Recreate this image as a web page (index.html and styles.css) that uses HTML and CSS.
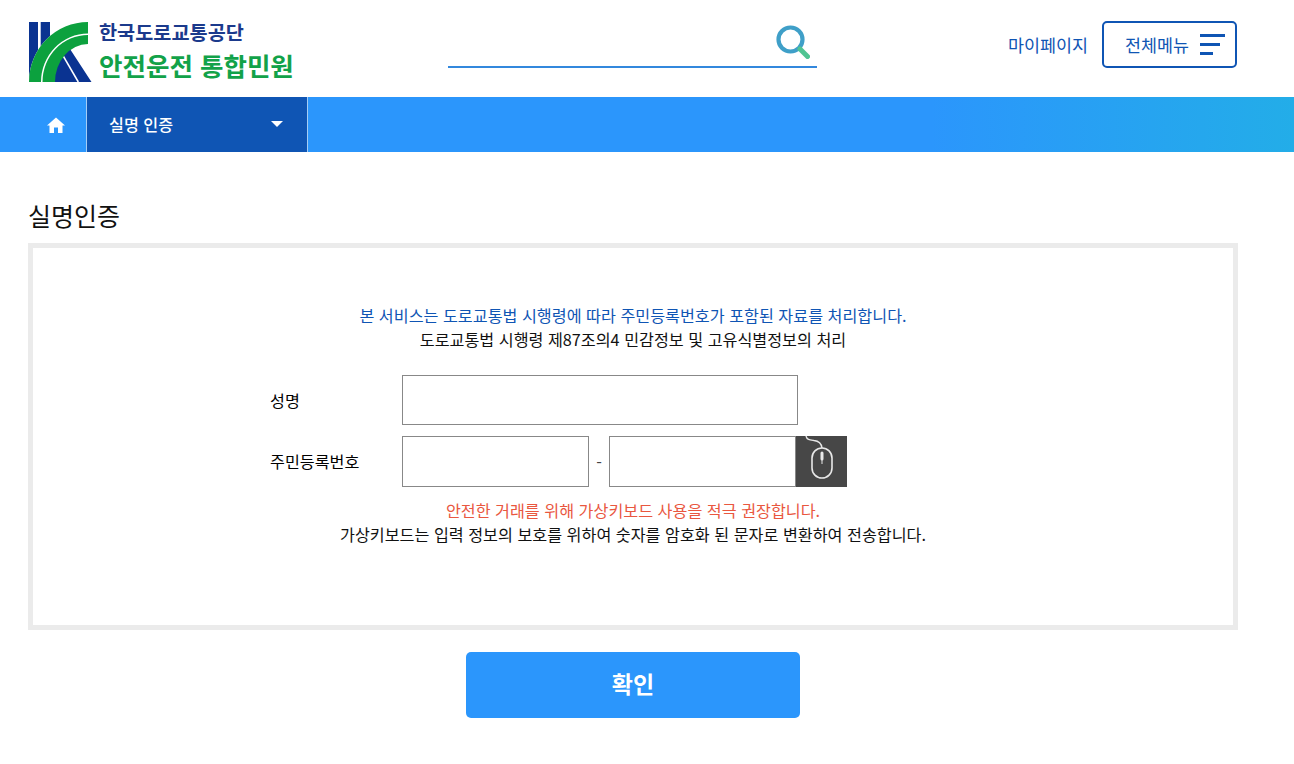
FILE: index.html
```html
<!DOCTYPE html>
<html lang="ko">
<head>
  <meta charset="UTF-8">
  <title>실명인증</title>
  <link rel="stylesheet" href="styles.css">
</head>
<body>
  <header class="header">
    <a class="logo">
      <svg class="logo-mark" width="63" height="60" viewBox="0 0 63 60">
        <rect x="0" y="0" width="9" height="60" fill="#0a3391"/>
        <rect x="11.7" y="0" width="9.3" height="60" fill="#0a3391"/>
        <path d="M59,0 A59,60 0 0 0 0,60 H59 Z" fill="#fff"/>
        <polygon points="41,27 62.5,60 20,60 30,35 33,27" fill="#0a3391"/>
        <path d="M32.7,31.3 L49.3,60" stroke="#fff" stroke-width="1.6" fill="none"/>
        <path d="M59,0 V11.5 A47,48.5 0 0 0 12,60 H0 A59,60 0 0 1 59,0 Z" fill="#0ca13e"/>
        <path d="M59,13 V22 A33,38 0 0 0 26,60 H13.5 A45.5,47 0 0 1 59,13 Z" fill="#0ca13e"/>
      </svg>
      <span class="logo-text">
        <span class="logo-org">한국도로교통공단</span>
        <span class="logo-name">안전운전 통합민원</span>
      </span>
    </a>
    <div class="search">
      <svg width="34" height="34" viewBox="0 0 34 34">
        <circle cx="14.5" cy="14.5" r="12" fill="none" stroke="#3f9fc8" stroke-width="4.2"/>
        <path d="M24 24 L31.5 31.5" stroke="#50c492" stroke-width="5" stroke-linecap="round"/>
      </svg>
    </div>
    <div class="util">
      <a class="mypage">마이페이지</a>
      <button class="all-menu">
        전체메뉴
        <span class="bars"><i></i><i></i><i></i></span>
      </button>
    </div>
  </header>

  <nav class="nav">
    <a class="nav-home">
      <svg width="18" height="16" viewBox="0 0 18 16">
        <path d="M9 0.5 L18 8.5 H15.5 V16 H11 V10.5 H7 V16 H2.5 V8.5 H0 Z" fill="#fff"/>
      </svg>
    </a>
    <a class="nav-select">실명 인증<span class="caret"></span></a>
  </nav>

  <main class="main">
    <h2 class="title">실명인증</h2>
    <section class="box">
      <p class="notice-blue">본 서비스는 도로교통법 시행령에 따라 주민등록번호가 포함된 자료를 처리합니다.</p>
      <p class="notice">도로교통법 시행령 제87조의4 민감정보 및 고유식별정보의 처리</p>
      <div class="form">
        <div class="row">
          <label class="label">성명</label>
          <input class="input input-name" type="text">
        </div>
        <div class="row row-id">
          <label class="label label-id">주민등록번호</label>
          <input class="input input-id" type="text">
          <span class="dash">-</span>
          <input class="input input-id" type="text">
          <span class="mouse-btn">
            <svg width="51" height="51" viewBox="0 0 51 51">
              <path d="M10 0 C11 4 14 4 18 4.5 C23 5 25.5 8 26 12" fill="none" stroke="#e8e8e8" stroke-width="1.4"/>
              <rect x="16" y="12" width="20" height="30" rx="10" fill="none" stroke="#e8e8e8" stroke-width="1.6"/>
              <path d="M26 17 V23" stroke="#e8e8e8" stroke-width="3" stroke-linecap="round"/>
              <path d="M26 23 V28" stroke="#e8e8e8" stroke-width="1"/>
            </svg>
          </span>
        </div>
      </div>
      <p class="notice-red">안전한 거래를 위해 가상키보드 사용을 적극 권장합니다.</p>
      <p class="notice">가상키보드는 입력 정보의 보호를 위하여 숫자를 암호화 된 문자로 변환하여 전송합니다.</p>
    </section>
    <div class="actions">
      <button class="confirm">확인</button>
    </div>
  </main>
</body>
</html>
```

FILE: styles.css
```css
* {
  box-sizing: border-box;
}
body {
  margin: 0;
  background-color: #fff;
  color: #111;
  font-family: "Noto Sans CJK KR", "Noto Sans", sans-serif;
}
p {
  margin: 0;
}
.header {
  display: flex;
  align-items: flex-start;
  height: 97px;
  padding: 21px 57px 0 29px;
}
.logo {
  display: flex;
  width: 419px;
  padding-top: 1px;
}
.logo-text {
  display: flex;
  flex-direction: column;
  margin-left: 7px;
  font-weight: 700;
}
.logo-org {
  height: 26px;
  margin-top: -3px;
  color: #1b3a8c;
  font-size: 19.7px;
  line-height: 26px;
}
.logo-name {
  margin-top: 3px;
  color: #12a249;
  font-size: 25.5px;
  line-height: 34px;
}
.search {
  display: flex;
  justify-content: flex-end;
  width: 369px;
  height: 47px;
  padding: 4px 7px 0 0;
  border-bottom: 2px solid #3388dd;
}
.util {
  display: flex;
  align-items: center;
  margin-left: auto;
  height: 47px;
  gap: 14px;
}
.mypage {
  color: #0f55b4;
  font-size: 17.4px;
}
.all-menu {
  display: flex;
  align-items: center;
  gap: 11px;
  width: 135px;
  height: 47px;
  padding: 0 0 0 21px;
  border: 2px solid #0f55b4;
  border-radius: 5px;
  background: #fff;
  color: #0f55b4;
  font-family: inherit;
  font-size: 17.4px;
}
.bars {
  display: flex;
  flex-direction: column;
  gap: 5.5px;
  width: 25px;
}
.bars i {
  display: block;
  height: 3.5px;
  background-color: #0f55b4;
}
.bars i:nth-child(2) {
  width: 20px;
}
.bars i:nth-child(3) {
  width: 13px;
}
.nav {
  display: flex;
  height: 55px;
  background: linear-gradient(to right, #2b96fc 72%, #23ade8);
}
.nav-home {
  display: flex;
  align-items: center;
  width: 86px;
  padding-left: 47px;
}
.nav-select {
  display: flex;
  align-items: center;
  justify-content: space-between;
  width: 222px;
  padding: 0 24px 2px 22px;
  border-left: 1px solid #a5cdf5;
  border-right: 1px solid #a5cdf5;
  background-color: #0f55b4;
  color: #fff;
  font-size: 16.2px;
  font-weight: 500;
}
.caret {
  width: 0;
  height: 0;
  border-left: 6px solid transparent;
  border-right: 6px solid transparent;
  border-top: 6px solid #fff;
}
.main {
  width: 1210px;
  margin-left: 28px;
}
.title {
  margin: 45px 0 0;
  height: 46px;
  font-size: 25px;
  font-weight: 400;
  line-height: 36px;
}
.box {
  height: 387px;
  padding-top: 55px;
  border: 5px solid #ebebeb;
  text-align: center;
  font-size: 16.2px;
  line-height: 24px;
}
.notice-blue {
  color: #0f55b4;
}
.notice-red {
  color: #e9573f;
}
.notice {
  color: #111;
}
.form {
  margin: 24px 0 11px;
  padding-left: 237px;
  text-align: left;
}
.row {
  display: flex;
  align-items: center;
}
.row-id {
  margin-top: 11px;
}
.label {
  width: 132px;
  color: #000;
}
.label-id {
  padding-bottom: 2px;
}
.input {
  height: 50px;
  padding: 0 8px;
  border: 1px solid #888;
  border-radius: 0;
  background: #fff;
}
.input-name {
  width: 396px;
}
.input-id {
  width: 187px;
  height: 51px;
}
.dash {
  width: 20px;
  text-align: center;
  color: #444;
}
.mouse-btn {
  display: flex;
  width: 51px;
  height: 51px;
  background-color: #474747;
}
.actions {
  display: flex;
  justify-content: center;
  margin-top: 22px;
}
.confirm {
  width: 334px;
  height: 66px;
  padding: 0 0 4px;
  border: 0;
  border-radius: 5px;
  background-color: #2b96fc;
  color: #fff;
  font-family: inherit;
  font-size: 23px;
  font-weight: 700;
}
```
